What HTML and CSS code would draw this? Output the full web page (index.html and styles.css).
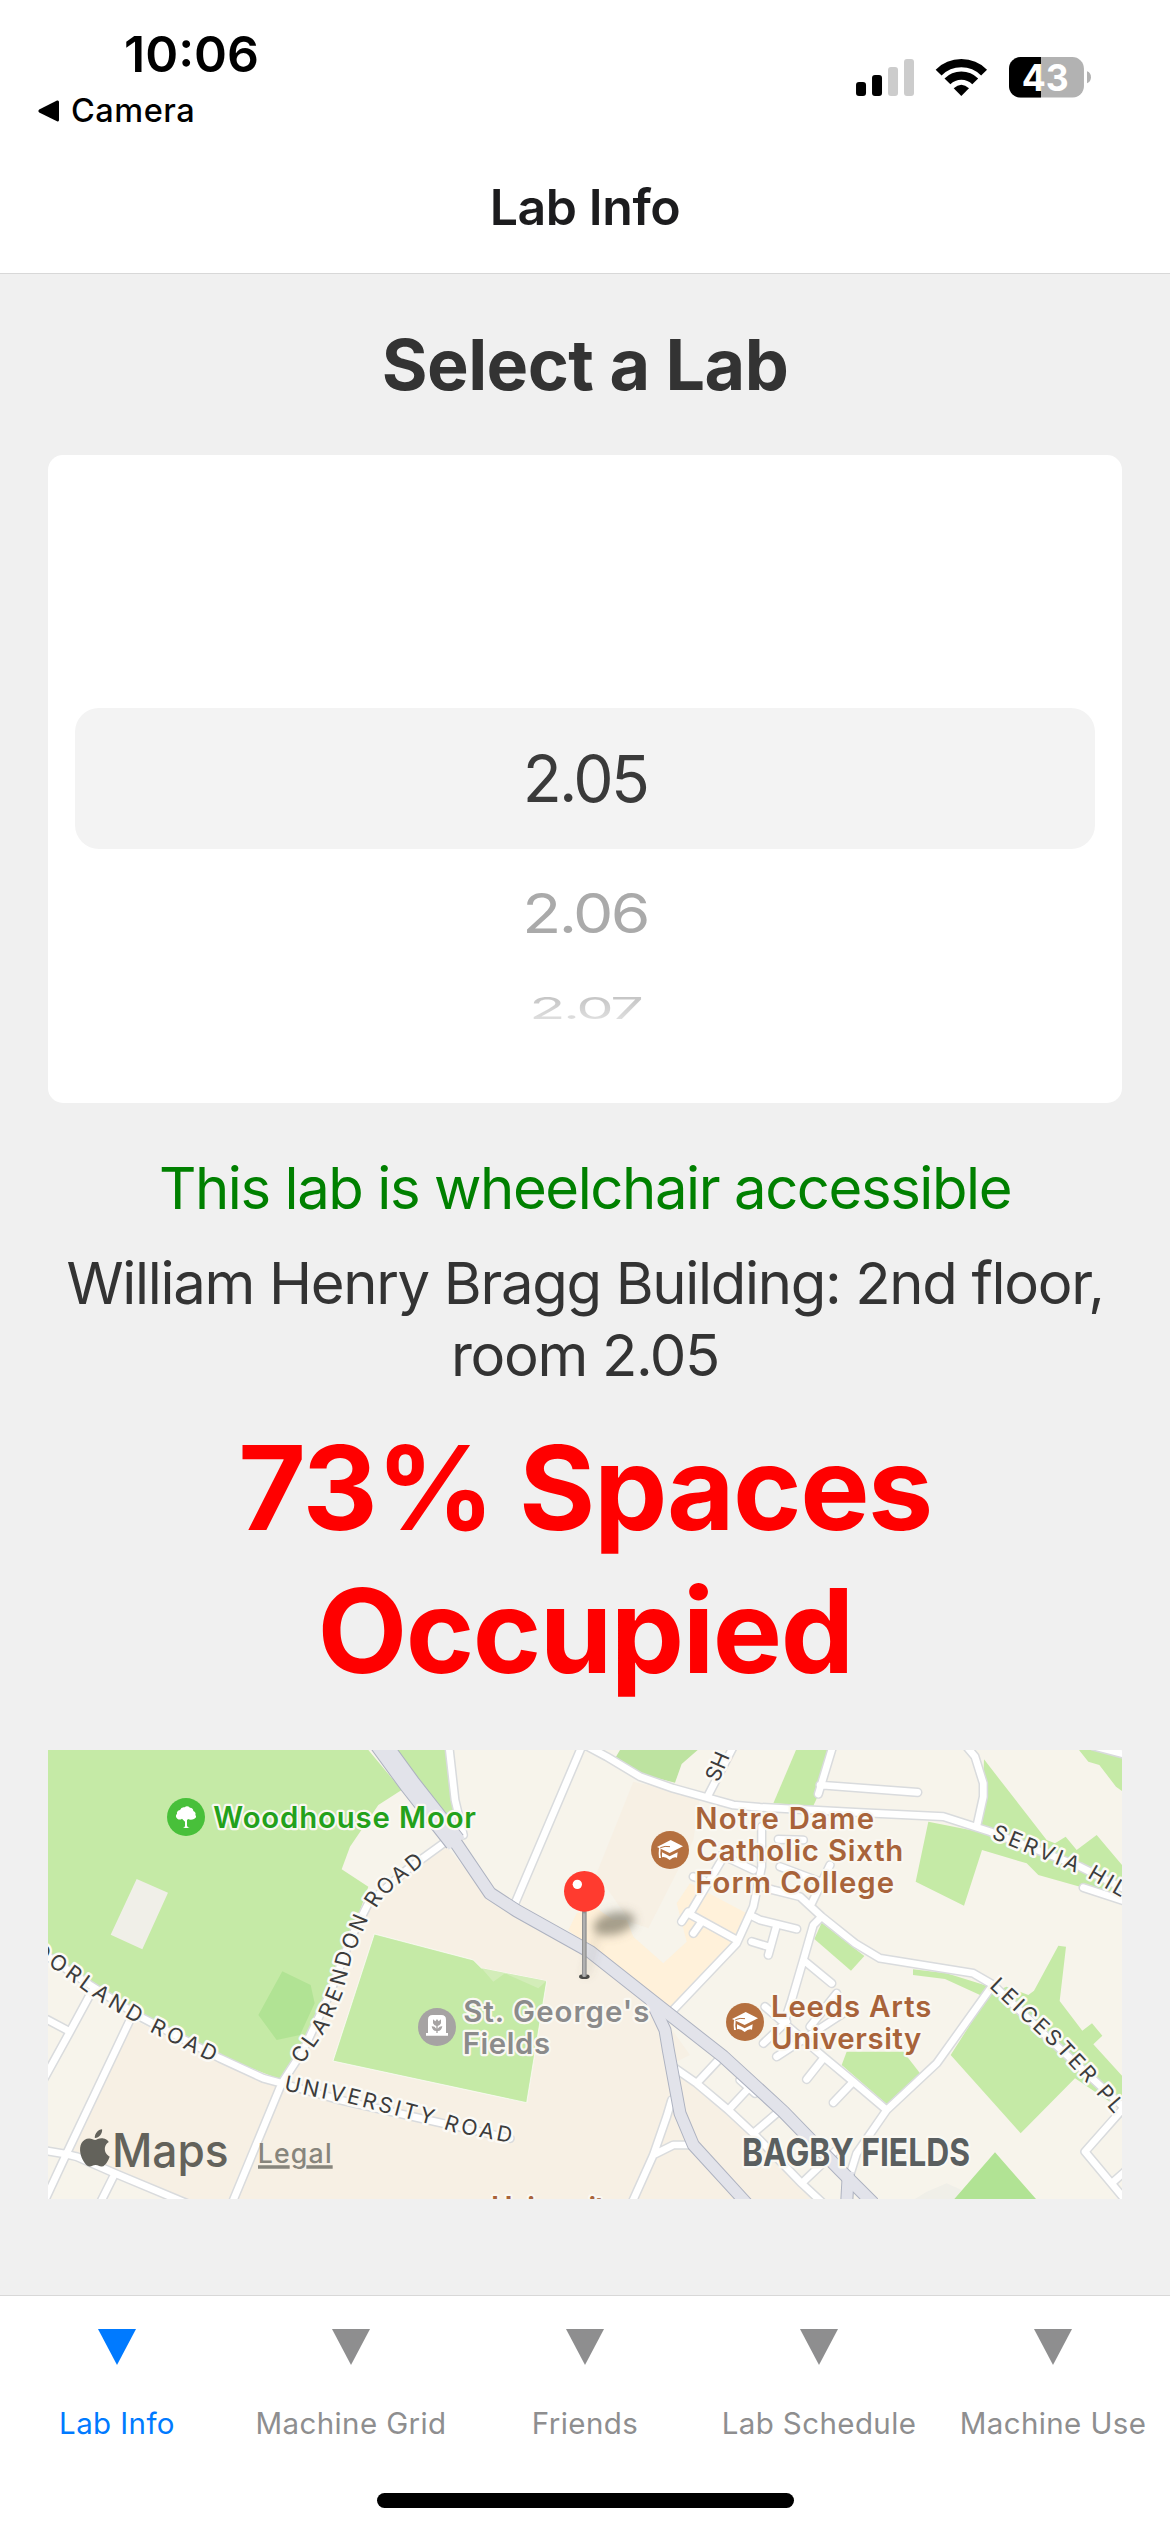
FILE: index.html
```html
<!DOCTYPE html>
<html lang="en">
<head>
<meta charset="utf-8">
<title>Lab Info</title>
<link rel="stylesheet" href="styles.css">
</head>
<body>
<div class="screen">
  <header class="header">
    <div class="status">
      <div class="status-left">
        <div class="time"><span>10:06</span></div>
        <div class="back">
          <svg class="back-arrow" viewBox="0 0 21 22"><path d="M1.2 9.6 19 .6Q21 0 21 2v18q0 2-2 1.200L1.200 12.400Q-.4 11 1.200 9.600z"/></svg>
          <span>Camera</span>
        </div>
      </div>
      <svg class="status-icons" viewBox="108 48 705 128">
        <rect x="108" y="126" width="30" height="42" rx="9"/>
        <rect x="156" y="105" width="30" height="63" rx="9"/>
        <rect x="204" y="81" width="30" height="87" rx="9" fill="#ccc"/>
        <rect x="252" y="57" width="30" height="111" rx="9" fill="#ccc"/>
        <g fill="none" stroke="#000">
          <path d="M355.800 97.800A96.500 96.500 0 0 1 492.200 97.800" stroke-width="25"/>
          <path d="M382.300 124.300A59 59 0 0 1 465.700 124.300" stroke-width="25"/>
        </g>
        <path d="M424 168 401 145Q424 123 447 145z"/>
        <clipPath id="battery"><rect x="567" y="51" width="225" height="122" rx="35"/></clipPath>
        <g clip-path="url(#battery)">
          <rect x="567" y="51" width="225" height="122" fill="#b2b2b2"/>
          <rect x="567" y="51" width="96" height="122"/>
        </g>
        <path d="M801 94q12 4 12 18t-12 18z" fill="#b2b2b2"/>
        <text class="battery-level" x="605" y="153" textLength="141" lengthAdjust="spacingAndGlyphs">43</text>
      </svg>
    </div>
    <h1 class="title"><span>Lab Info</span></h1>
  </header>

  <main class="content">
    <h2 class="heading"><span>Select a Lab</span></h2>
    <div class="picker">
      <div class="option option-selected"><span>2.05</span></div>
      <div class="option option-next"><span>2.06</span></div>
      <div class="option option-far"><span>2.07</span></div>
    </div>
    <p class="access"><span>This lab is wheelchair accessible</span></p>
    <p class="location">William Henry Bragg Building: 2nd floor,<br>room 2.05</p>
    <p class="occupancy">73% Spaces<br>Occupied</p>

    <svg class="map" viewBox="24 30 3222 1347">
      <defs>
        <filter id="soft" x="-60%" y="-60%" width="220%" height="220%"><feGaussianBlur stdDeviation="15"/></filter>
        <path id="p-moorland" d="M-80 578 65 675 195 768 355 862 560 962"/>
        <path id="p-clarendon" d="M770 962 788 930 845 850 885 755 912 650 958 540 1000 475 1040 432 1150 342"/>
        <path id="p-university" d="M735 1028 850 1052 942 1070 1050 1098 1165 1128 1240 1152 1430 1189"/>
        <path id="p-servia" d="M2862 273 2965 315 3085 363 3160 397 3246 447 3330 495"/>
        <path id="p-leicester" d="M2862 724 2965 822 3070 920 3140 995 3190 1050 3270 1142"/>
        <path id="p-sh" d="M2014 120 2080 -30"/>
        <g id="roads">
          <path d="M24 650 150 735 300 830 540 955 670 1015 725 1030M725 1030 900 1080 1140 1135 1410 1195M725 1030 790 930 870 760 930 600 985 490 1100 390 1210 310M725 1030 580 1380M155 755 90 875 10 1020M20 838 90 875M270 840 80 1240 15 1380M20 1233 80 1243 110 1250 225 1300 440 1390M225 1300 180 1390"/>
          <path d="M1227 20 1245 180 1270 285M1625 20 1425 490M1635 15 1700 50 1800 110 1900 145 2080 195 2160 202 2460 218 2710 230 2850 275 3120 380 3260 450M2080 20 2005 165M3250 482 3130 443M2378 20 2335 162M2340 135 2633 157M2780 20 2805 50 2830 130 2830 170 2810 260M3160 18 3250 42"/>
          <path d="M1890 820 2090 610 2140 500 2165 380 2165 260M1945 520 2090 600M1945 515 1925 545M1985 545 1960 580M1950 520 2045 360M2140 530 2160 540 2270 567M2210 555 2185 645M2135 605 2185 620M2165 440 2200 450 2280 470 2345 530 2445 610 2520 655 2800 700 2860 735 3020 890 3260 1110M2315 490 2370 375M2220 380 2340 425M2215 298 2290 300M2045 345 2140 390M1960 410 1990 420M2345 530 2320 555 2290 660 2255 780 2235 840M2290 660 2375 730"/>
          <path d="M2855 740 2690 970 2540 1110 2450 1240 2425 1320M2175 800 2350 950 2440 1025 2540 1110M2350 955 2300 1018M2440 1025 2380 1088M2240 845 2170 910M2390 760 2310 860M2425 810 2210 950M1905 985 1970 1030 2065 1110 2140 1180 2285 1330 2360 1400M1970 1030 2040 955M2065 1110 2130 1040M2140 1180 2210 1120M2285 1330 2390 1230M2100 1020 2145 1060M1895 1080 1880 1130 1840 1245 1775 1390M1840 1245 1900 1215 1950 1215M3250 1105 3135 1235 3260 1385M3215 1330 3260 1290"/>
        </g>
        <g id="cap" fill="#fff">
          <path d="M-39-9 2-30 39-11-1 9z"/>
          <path d="M-24 7-1 19 23 7 21 23Q12 18-1 30-14 19-24 22z"/>
          <path d="M-33-6-28-4-29 12-27 24-33 24-34 10z"/>
          <path d="M-29-7Q-15-13 0-10" fill="none" stroke="#b5703f" stroke-width="3"/>
        </g>
      </defs>

      <rect x="24" y="30" width="3222" height="1347" fill="#f7f4eb"/>
      <path fill="#f7f0e4" d="M278 840 720 1030 780 940 990 490 1210 310 1340 460 1630 630 1840 790 1950 945 1900 970 2140 1180 2290 1330 2350 1380 430 1380 200 1290 90 1245z"/>
      <path fill="#f7f0e4" d="M1780 125 1980 170 1960 300 1825 565 1770 545 1670 400z"/>
      <path fill="#fff1da" d="M1610 520 1670 505 1720 540 1760 540 1780 590 1870 670 1940 605 1910 490 1950 430 2120 520 2090 610 1890 820 1585 570z"/>

      <g fill="#c5eaa6">
        <path d="M24 30H985L1085 150 1015 195 930 320 905 388 985 440 880 740 780 940 725 1020 520 940 280 830 24 650z"/>
        <path d="M1050 30H1225L1250 215 1195 230z"/>
        <path d="M1003 582 1300 660 1325 685 1520 723 1460 1088 879 963z" stroke="#fff" stroke-width="2"/>
        <path d="M2268 30H2365L2335 165 2320 197 2200 190z"/>
        <path d="M2665 245 2840 280 3246 430V480L3120 440 2995 405 2960 370 2826 330 2772 497 2627 425z"/>
        <path d="M2832 58 3020 300 3045 310 3077 290 3110 330 3170 285 3246 375V450L2825 260z"/>
        <path d="M3117 30H3170L3246 50V153L3228 140 3178 75 3145 65z"/>
        <path d="M2345 548 2473 648 2433 692 2323 597z"/>
        <path d="M2619 688 2720 700 2850 740 2820 765 2715 717 2619 705z"/>
        <path d="M2850 760 2900 740 2965 765 2982 752 3055 617 3078 620 3059 783 3127 872 3156 850 3187 887 3160 913 3246 1007V1110L3105 1015 2942 1180 2732 945z"/>
        <path d="M2420 935H2590L2640 1000 2540 1092 2405 975z"/>
      </g>
      <path fill="#d3edb9" d="M1325 685 1519 723 1495 745 1395 700 1360 725z"/>
      <path fill="#bde3a0" d="M1740 30H1973L1925 72 1905 128 1795 100 1728 50z"/>
      <path fill="#f0efe8" d="M290 417 384 458 307 628 212 584zM2625 1377 2660 1355 2720 1330 2765 1350 2743 1377z"/>
      <path fill="#b1e394" d="M727 694 812 735 824 790 780 885 710 900 655 825zM2865 1237 2988 1377H2743z"/>

      <g fill="none" stroke-linejoin="round">
        <use href="#roads" stroke="#d9dbdd" stroke-width="29" stroke-linecap="round"/>
        <use href="#roads" stroke="#fff" stroke-width="20" stroke-linecap="round"/>
        <g stroke="#adb2c0">
          <path d="M1010 -4 1110 133 1245 305" stroke-width="66"/>
          <path d="M1225 275 1350 460 1430 512 1650 635 1840 785 2050 950 2230 1115 2400 1290 2500 1390" stroke-width="41"/>
          <path d="M1835 785 1875 870 1885 930 1920 1120 1960 1215 2120 1390M2425 1300 2420 1390" stroke-width="39"/>
        </g>
        <g stroke="#e2e3ea">
          <path d="M1010 -4 1110 133 1250 311" stroke-width="60"/>
          <path d="M1225 275 1350 460 1430 512 1650 635 1840 785 2050 950 2230 1115 2400 1290 2500 1390" stroke-width="35"/>
          <path d="M1830 775 1875 870 1885 930 1920 1120 1960 1215 2120 1390M2425 1295 2420 1390" stroke-width="33"/>
        </g>
      </g>

      <g class="road-label">
        <text dy="23"><textPath href="#p-moorland" startOffset="10" textLength="702">MOORLAND ROAD</textPath></text>
        <text dy="23"><textPath href="#p-clarendon" textLength="730">CLARENDON ROAD</textPath></text>
        <text dy="23"><textPath href="#p-university" textLength="700">UNIVERSITY ROAD</textPath></text>
        <text dy="23"><textPath href="#p-servia" textLength="480">SERVIA HILL</textPath></text>
        <text dy="23"><textPath href="#p-leicester" textLength="540">LEICESTER PL</textPath></text>
        <text dy="23"><textPath href="#p-sh">SH</textPath></text>
      </g>

      <g class="place park">
        <text x="520" y="265" textLength="788">Woodhouse Moor</text>
      </g>
      <g class="place school">
        <text x="1966" y="267" textLength="536">Notre Dame</text>
        <text x="1969" y="362" textLength="621">Catholic Sixth</text>
        <text x="1966" y="458" textLength="596">Form College</text>
        <text x="2193" y="830" textLength="481">Leeds Arts</text>
        <text x="2193" y="927" textLength="451">University</text>
        <text x="1353" y="1435" textLength="390">University</text>
      </g>
      <g class="place cemetery">
        <text x="1270" y="847" textLength="558">St. George's</text>
        <text x="1268" y="942" textLength="262">Fields</text>
      </g>
      <text class="district" x="2106" y="1278" textLength="684" lengthAdjust="spacingAndGlyphs">BAGBY FIELDS</text>

      <g transform="translate(438 231)">
        <circle r="57" fill="#48c03a"/>
        <path fill="#fff" d="M-26 5Q-34-2-27-10-29-18-18-21-14-31-4-29 3-36 12-28 22-27 22-18 31-14 28-6 34 1 24 6 14 11 6 6L3 10V26Q4 31 11 33H-9Q-3 31-3 26V14L-12 5Q-19 10-26 5z"/>
      </g>
      <g transform="translate(1191 861)">
        <circle r="57" fill="#a6a3a3"/>
        <path fill="#fff" d="M-27 18V-22Q-27-36-13-36H13Q27-36 27-22V18H33V26H-33V18z"/>
        <path fill="#a6a3a3" d="M-12-23-5-17 0-24 5-17 12-23V-11Q9-4 2-3V5Q8-3 16-2 14 12 2 12V18H-2V12Q-14 12-16-2-8-3-2 5V-3Q-9-4-12-11z"/>
      </g>
      <g transform="translate(1890 330)"><circle r="57" fill="#b5703f"/><use href="#cap"/></g>
      <g transform="translate(2115 846)"><circle r="57" fill="#b5703f"/><use href="#cap"/></g>

      <g filter="url(#soft)">
        <ellipse cx="1722" cy="550" rx="63" ry="33" fill="#6f6a58" opacity=".62" transform="rotate(-14 1722 550)"/>
        <path d="M1675 570 1638 706" stroke="#6f6a58" stroke-width="14" opacity=".2"/>
      </g>
      <ellipse cx="1633" cy="710" rx="16" ry="7" fill="#4c4b48"/>
      <rect x="1626" y="505" width="14" height="206" rx="5" fill="#919191"/>
      <rect x="1629" y="520" width="7" height="190" fill="#b0b0b0"/>
      <circle cx="1633" cy="454" r="61" fill="#ff3b2f"/>
      <circle cx="1612" cy="433" r="14" fill="#fff"/>

      <path class="attribution" transform="translate(110 1168) scale(4.55 4.65)" d="M12.152 6.896c-.948 0-2.415-1.078-3.96-1.040-2.040.027-3.910 1.183-4.961 3.014-2.117 3.675-.546 9.103 1.519 12.090 1.013 1.454 2.208 3.090 3.792 3.039 1.520-.065 2.090-.987 3.935-.987 1.831 0 2.350.987 3.960.948 1.637-.026 2.676-1.480 3.676-2.948 1.156-1.688 1.636-3.325 1.662-3.415-.039-.013-3.182-1.221-3.220-4.857-.026-3.040 2.480-4.494 2.597-4.559-1.429-2.090-3.623-2.324-4.390-2.376-2-.156-3.675 1.090-4.610 1.090zM15.530 3.830c.843-1.012 1.400-2.427 1.245-3.830-1.207.052-2.662.805-3.532 1.818-.780.896-1.454 2.338-1.273 3.714 1.338.104 2.715-.688 3.559-1.701"/>
      <text class="attribution brand" x="216" y="1280" textLength="350" lengthAdjust="spacingAndGlyphs">Maps</text>
      <text class="legal" x="653" y="1269" textLength="222">Legal</text>
      <path d="M654 1281H749M799 1281H878" stroke="#87857c" stroke-width="10"/>
    </svg>
  </main>

  <nav class="tabs">
    <div class="tab tab-active"><svg class="tab-icon" viewBox="0 0 38 36"><path d="M0 0H38L19 36z"/></svg><span>Lab Info</span></div>
    <div class="tab"><svg class="tab-icon" viewBox="0 0 38 36"><path d="M0 0H38L19 36z"/></svg><span>Machine Grid</span></div>
    <div class="tab"><svg class="tab-icon" viewBox="0 0 38 36"><path d="M0 0H38L19 36z"/></svg><span>Friends</span></div>
    <div class="tab"><svg class="tab-icon" viewBox="0 0 38 36"><path d="M0 0H38L19 36z"/></svg><span>Lab Schedule</span></div>
    <div class="tab"><svg class="tab-icon" viewBox="0 0 38 36"><path d="M0 0H38L19 36z"/></svg><span>Machine Use</span></div>
  </nav>
  <div class="home"><div class="home-bar"></div></div>
</div>
</body>
</html>
```
FILE: styles.css
```css
* { box-sizing: border-box; }
body { margin: 0; font-family: Inter, "Liberation Sans", sans-serif; background: #fff; }
h1, h2, p { margin: 0; }
svg { display: block; }

.screen { width: 1170px; height: 2532px; display: flex; flex-direction: column; overflow: hidden; }

.header { height: 274px; background: #fff; border-bottom: 1px solid #d8d8d8; }
.status { display: flex; justify-content: space-between; height: 177px; padding: 29px 79px 0 38px; }
.time { font-size: 50px; line-height: 50px; font-weight: 600; padding-left: 86px; letter-spacing: 0; }
.back { display: flex; align-items: center; gap: 12px; margin-top: 12px; font-size: 32.500px; line-height: 40px; font-weight: 500; letter-spacing: 0.5px; }
.back-arrow { width: 21px; height: 22px; }
.status-icons { width: 235px; height: 42.670px; margin-top: 27px; }
.battery-level { font-size: 111px; font-weight: 700; fill: #fff; }
.title { font-size: 50px; line-height: 60px; font-weight: 600; text-align: center; color: #1c1c1e; letter-spacing: -0.4px; }

.content { height: 2021px; background: #f0f0f0; padding: 51px 48px 0; }
.heading { font-size: 70px; line-height: 80px; font-weight: 700; text-align: center; color: #333; letter-spacing: -0.550px; }
.picker { height: 648px; margin-top: 50px; padding: 253px 27px 0; border-radius: 15px; background: #fff; }
.option { display: flex; align-items: center; justify-content: center; font-size: 64px; letter-spacing: -2.600px; }
.option-selected { height: 141px; border-radius: 24px; background: #f3f3f3; color: #3a3a3a; }
.option-next { height: 129px; color: #aaa; }
.option-next span { transform: scaleY(0.85); }
.option-far { height: 61px; }
.option-far span { transform: scale(0.93, 0.46); color: transparent; background: linear-gradient(#c6c6c6 20%, #dedede 80%); -webkit-background-clip: text; background-clip: text; }
.access, .location { font-size: 58px; text-align: center; white-space: nowrap; }
.access { margin-top: 49px; line-height: 72px; color: #008000; letter-spacing: -1.420px; }
.location { margin: 24px -20px 0; line-height: 71.500px; color: #333; letter-spacing: -1.320px; }
.occupancy { margin-top: 25px; font-size: 116.500px; line-height: 143px; font-weight: 700; text-align: center; color: #f00; letter-spacing: -1.500px; }

.map { width: 1074px; height: 449px; margin-top: 48px; }
.road-label text { font-size: 64px; font-weight: 400; fill: #3c3c3c; stroke: #fbfaf6; stroke-width: 15px; stroke-linejoin: round; paint-order: stroke; }
.place text { font-size: 88px; font-weight: 600; stroke: #faf8f2; stroke-width: 13px; stroke-linejoin: round; paint-order: stroke; }
.park { fill: #23a11b; }
.school { fill: #a8633a; }
.cemetery { fill: #8b8b8b; }
.district { font-size: 115px; font-weight: 700; fill: #5a5f60; stroke: #faf8f2; stroke-width: 15px; stroke-linejoin: round; paint-order: stroke; }
.attribution { fill: #63625b; }
.brand { font-size: 138px; font-weight: 500; }
.legal { font-size: 80px; font-weight: 500; fill: #87857c; }

.tabs { display: grid; grid-template-columns: repeat(5, 234px); height: 179px; border-top: 1px solid #d8d8d8; background: #fff; }
.tab { display: flex; flex-direction: column; align-items: center; padding-top: 33px; font-size: 29.500px; line-height: 40px; letter-spacing: 0.4px; color: #8e8e8f; white-space: nowrap; }
.tab-active { color: #007aff; }
.tab-icon { width: 38px; height: 36px; margin-bottom: 38px; fill: currentColor; }
.home { display: flex; justify-content: center; padding-top: 19px; }
.home-bar { width: 417px; height: 15px; border-radius: 8px; background: #000; }
```
